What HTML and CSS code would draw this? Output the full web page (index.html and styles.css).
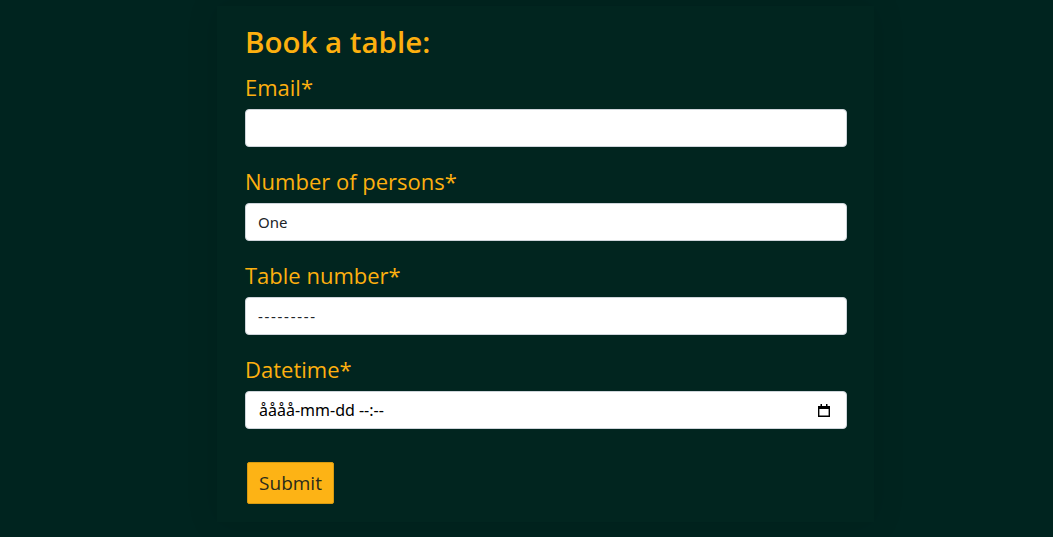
FILE: index.html
```html
<!DOCTYPE html>
<html>
<head>
<meta charset="utf-8">
<link rel="stylesheet" href="styles.css">
</head>
<body>
<main class="page">
  <form class="card">
    <h1 class="title">Book a table:</h1>
    <div class="field">
      <label class="label">Email*</label>
      <input class="control" type="text">
    </div>
    <div class="field">
      <label class="label">Number of persons*</label>
      <select class="control select"><option>One</option></select>
    </div>
    <div class="field">
      <label class="label">Table number*</label>
      <select class="control select dashes"><option>---------</option></select>
    </div>
    <div class="field">
      <label class="label">Datetime*</label>
      <div class="date-wrap">
        <input class="control date" type="text" value="åååå-mm-dd --:--" readonly>
        <svg class="cal" width="14" height="14" viewBox="0 0 14 14"><path d="M1.7 3.7h10.6v9.6H1.7z" fill="none" stroke="#000" stroke-width="1.4"/><rect x="1" y="3" width="12" height="3" fill="#000"/><rect x="3.5" y="1" width="1.5" height="3" fill="#000"/><rect x="9" y="1" width="1.5" height="3" fill="#000"/></svg>
      </div>
    </div>
    <button class="submit" type="button">Submit</button>
  </form>
</main>
</body>
</html>
```
FILE: styles.css
```css
html, body {
  margin: 0;
  padding: 0;
  background: #00241f;
  height: 100%;
}
body {
  font-family: "Open Sans", "Noto Sans", sans-serif;
}
.page {
  display: flex;
  justify-content: center;
  padding-top: 6px;
}
.card {
  box-sizing: border-box;
  width: 657px;
  margin-left: 38px;
  padding: 18px 28px 18px 28px;
  background: #01251f;
  box-shadow: 0 0 30px rgba(0,0,0,0.12);
  display: flex;
  flex-direction: column;
  align-items: flex-start;
}
.title {
  margin: 0 0 13px 0;
  color: #fdb00f;
  font-size: 29.5px;
  font-weight: 600;
  line-height: 36px;
}
.field {
  display: flex;
  flex-direction: column;
  width: 602px;
  margin-bottom: 20px;
}
.label {
  color: #fdb00f;
  font-size: 22px;
  line-height: 28px;
  margin-bottom: 8px;
}
.control {
  box-sizing: border-box;
  width: 602px;
  height: 38px;
  border: 1px solid #ced4da;
  border-radius: 4px;
  background: #fff;
  padding: 0 12px;
  font-family: "Noto Sans", sans-serif;
  font-size: 15px;
  color: #212529;
  outline: none;
}
.select {
  appearance: none;
  -webkit-appearance: none;
}
.dashes {
  letter-spacing: 1.7px;
}
.date-wrap {
  position: relative;
}
.date {
  padding-left: 13px;
  color: #000;
  font-size: 16px;
}
.cal {
  position: absolute;
  right: 16px;
  top: 12px;
}
.submit {
  margin: 13px 0 0 2px;
  width: 87px;
  height: 42px;
  background: #fdb315;
  border: 1px solid #d79a10;
  border-radius: 2px;
  color: #2b2b1b;
  font-family: "Open Sans", sans-serif;
  font-size: 19px;
  padding: 0;
}
```
